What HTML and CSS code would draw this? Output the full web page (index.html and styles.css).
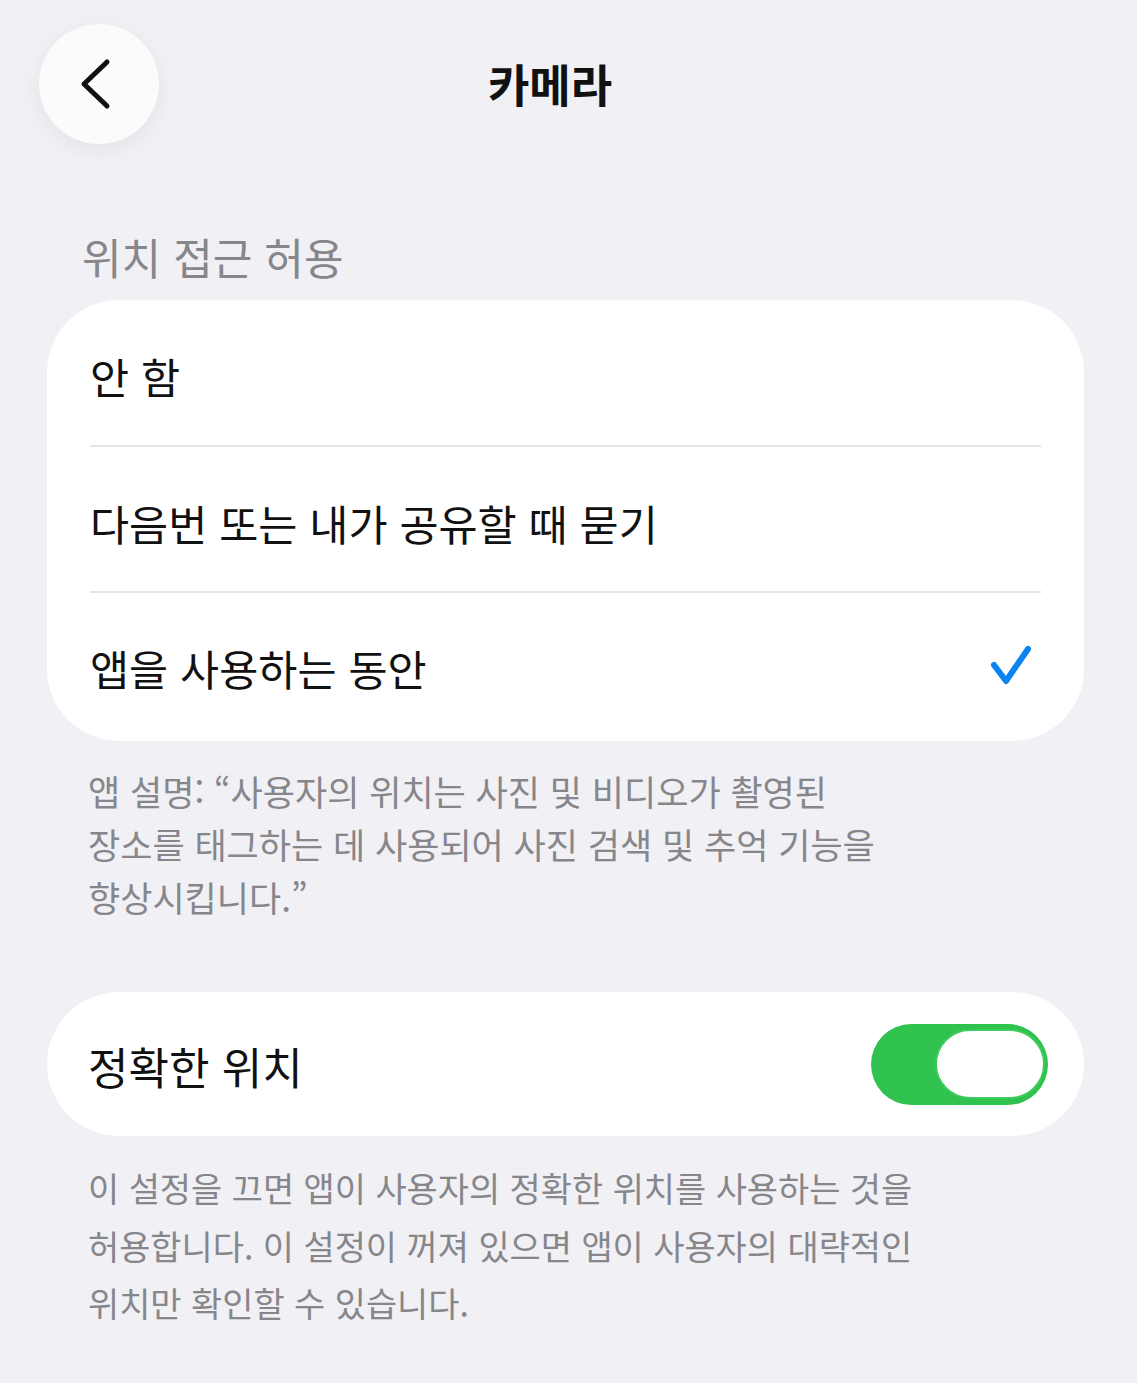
FILE: index.html
```html
<!DOCTYPE html>
<html lang="ko">
<head>
    <meta charset="UTF-8">
    <meta name="viewport" content="width=device-width, initial-scale=1.0">
    <title>카메라</title>
    <link rel="stylesheet" href="styles.css">
</head>
<body>
    <header class="topbar">
        <button class="back-btn" aria-label="뒤로">
            <svg width="40" height="60" viewBox="0 0 40 60">
                <path d="M30 8 L7 30 L30 52" fill="none" stroke="#111" stroke-width="5" stroke-linecap="round" stroke-linejoin="round"/>
            </svg>
        </button>
        <h1 class="title">카메라</h1>
    </header>

    <main class="content">
        <h2 class="section-label">위치 접근 허용</h2>
        <div class="card">
            <div class="row">안 함</div>
            <div class="row">다음번 또는 내가 공유할 때 묻기</div>
            <div class="row selected">
                <span>앱을 사용하는 동안</span>
                <svg class="check" width="44" height="44" viewBox="0 0 44 44">
                    <path d="M5 20 L17 36 L39 4" fill="none" stroke="#0a84f0" stroke-width="6" stroke-linecap="round" stroke-linejoin="round"/>
                </svg>
            </div>
        </div>
        <p class="note note-first">앱 설명: “사용자의 위치는 사진 및 비디오가 촬영된<br>장소를 태그하는 데 사용되어 사진 검색 및 추억 기능을<br>향상시킵니다.”</p>

        <div class="card toggle-card">
            <span>정확한 위치</span>
            <div class="switch on"><div class="knob"></div></div>
        </div>
        <p class="note note-second">이 설정을 끄면 앱이 사용자의 정확한 위치를 사용하는 것을<br>허용합니다. 이 설정이 꺼져 있으면 앱이 사용자의 대략적인<br>위치만 확인할 수 있습니다.</p>
    </main>
</body>
</html>
```

FILE: styles.css
```css
body {
    margin: 0;
    padding: 0;
    background-color: #f0f0f5;
    font-family: "Noto Sans CJK KR", "Noto Sans", sans-serif;
    color: #111;
}
.topbar {
    display: flex;
    align-items: center;
    padding: 24px 196px 0 39px;
}
.back-btn {
    width: 120px;
    height: 120px;
    border: none;
    border-radius: 50%;
    background: #fbfbfc;
    box-shadow: 0 6px 24px rgba(0, 0, 0, 0.06);
    display: flex;
    align-items: center;
    justify-content: center;
    padding: 0 4px 0 0;
    cursor: pointer;
}
.title {
    flex: 1;
    margin: 0;
    text-align: center;
    font-size: 45px;
    font-weight: 700;
    line-height: 1.2;
}
.content {
    padding: 0 53px 40px 47px;
}
.section-label {
    margin: 87px 0 19px 35px;
    font-size: 43px;
    font-weight: 400;
    line-height: 50px;
    color: #86868b;
}
.card {
    background: #fff;
    border-radius: 72px;
}
.row {
    height: 146px;
    margin: 0 43px;
    padding-top: 6px;
    display: flex;
    align-items: center;
    justify-content: space-between;
    font-size: 42.5px;
    border-bottom: 2px solid #e4e4e8;
    box-sizing: border-box;
}
.row:first-child {
    height: 147px;
}
.row:last-child {
    border-bottom: none;
    height: 148px;
    padding-top: 0;
}
.check {
    margin-right: 8px;
}
.note {
    margin: 23px 0 0 41px;
    color: #86868b;
}
.note-first {
    font-size: 35px;
    line-height: 53px;
}
.note-second {
    font-size: 33.9px;
    line-height: 57.5px;
}
.toggle-card {
    margin-top: 69px;
    height: 144px;
    padding: 4px 36px 0 41px;
    box-sizing: border-box;
    display: flex;
    align-items: center;
    justify-content: space-between;
    font-size: 44px;
}
.switch {
    width: 177px;
    height: 81px;
    margin-top: -4px;
    border-radius: 41px;
    background: #30c24e;
    display: flex;
    align-items: center;
    justify-content: flex-end;
    padding: 0 3px;
    box-sizing: border-box;
}
.knob {
    width: 110px;
    height: 70px;
    border-radius: 35px;
    background: #fff;
    border: 2px solid #3ccd5c;
    box-sizing: border-box;
}
```
